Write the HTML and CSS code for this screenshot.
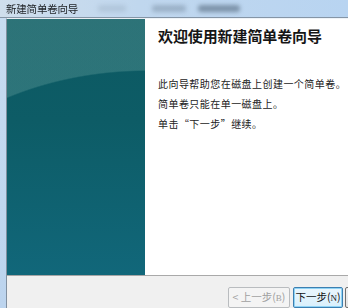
FILE: index.html
```html
<!DOCTYPE html>
<html lang="zh-CN">
<head>
<meta charset="utf-8">
<title>新建简单卷向导</title>
<link rel="stylesheet" href="styles.css">
</head>
<body>
<div class="window">
  <div class="titlebar">
    <span class="title">新建简单卷向导</span>
    <span class="ghost g1"></span>
    <span class="ghost g2"></span>
    <span class="ghost g3"></span>
  </div>
  <div class="frame">
    <div class="client">
      <div class="main">
        <div class="side"></div>
        <div class="content">
          <h1 class="heading">欢迎使用新建简单卷向导</h1>
          <p class="line first">此向导帮助您在磁盘上创建一个简单卷。</p>
          <p class="line">简单卷只能在单一磁盘上。</p>
          <p class="line">单击“下一步”继续。</p>
        </div>
      </div>
      <div class="footer">
        <button class="btn back" disabled>&lt; 上一步(<span class="key">B</span>)</button>
        <button class="btn next">下一步(<span class="key">N</span>)</button>
        <button class="btn cancel" aria-label="取消"></button>
      </div>
    </div>
  </div>
</div>
</body>
</html>
```
FILE: styles.css
```css
* { box-sizing: border-box; }
html, body {
  margin: 0;
  padding: 0;
  width: 348px;
  height: 308px;
  overflow: hidden;
  background: #c3d9ef;
  font-family: "Noto Sans CJK SC", "Noto Sans", sans-serif;
}
.window {
  width: 348px;
  height: 308px;
  display: flex;
  flex-direction: column;
  background: linear-gradient(90deg, #cfdeec 0%, #c0d7ee 40%, #b8d4f1 100%);
}
.titlebar {
  height: 18px;
  flex: none;
  display: flex;
  align-items: center;
  padding-left: 6px;
  border-bottom: 1px solid #8595a6;
  overflow: hidden;
}
.title {
  font-size: 10.5px;
  line-height: 12px;
  color: #202428;
  letter-spacing: -0.2px;
  filter: blur(0.3px);
}
.ghost {
  height: 7px;
  border-radius: 3px;
  background: rgba(90, 110, 130, 0.35);
  filter: blur(2px);
}
.g1 { width: 28px; margin-left: 20px; background: rgba(140, 160, 180, 0.3); }
.g2 { width: 34px; margin-left: 26px; }
.g3 { width: 42px; margin-left: 12px; background: rgba(60, 80, 100, 0.5); }
.frame {
  flex: 1;
  display: flex;
  padding-left: 6px;
  background: linear-gradient(180deg, #c7dcf1, #bcd4ee);
}
.client {
  flex: 1;
  display: flex;
  flex-direction: column;
  border-left: 1px solid #8190a0;
  border-top: 1px solid #eef3f8;
  background: #f0f0f0;
}
.main {
  height: 257px;
  flex: none;
  display: flex;
  border-bottom: 1px solid #a9a9a9;
}
.side {
  width: 138px;
  flex: none;
  background:
    radial-gradient(ellipse 279px 200px at 140px 251px, rgba(255,255,255,0) 99.3%, rgba(120,175,170,0.3) 100%),
    linear-gradient(180deg, #0c5962 0%, #0d5c66 40%, #11677a 100%);
  box-shadow: 1px 0 1px rgba(0,0,0,0.12);
}
.content {
  flex: 1;
  background: #ffffff;
  padding: 7px 0 0 13px;
  color: #1c1c1c;
}
.heading {
  margin: 0;
  font-size: 15px;
  line-height: 20px;
  font-weight: bold;
  letter-spacing: -0.1px;
  color: #161616;
}
.line {
  margin: 0;
  font-size: 10px;
  line-height: 20px;
  letter-spacing: 0.45px;
  color: #222;
}
.first { margin-top: 28px; }
.footer {
  flex: 1;
  display: flex;
  align-items: flex-start;
  gap: 3px;
  padding: 11px 0 0 221px;
  background: #f0f0f0;
  overflow: hidden;
}
.btn {
  flex: none;
  height: 21px;
  padding: 0;
  font-family: "Noto Sans CJK SC", "Noto Sans", sans-serif;
  font-size: 10.5px;
  line-height: 17px;
  border-radius: 2px;
}
.key { font-family: "Liberation Serif", serif; font-size: 9px; }
.back {
  width: 62px;
  color: #a0a0a0;
  background: #f4f4f4;
  border: 1px solid #b9bcbf;
}
.next {
  width: 50px;
  color: #111;
  background: linear-gradient(180deg, #eaf6fd, #d9f0fc);
  border: 1px solid #3c7fb1;
  box-shadow: inset 0 0 0 1px #8fd3f5;
}
.cancel {
  width: 60px;
  margin-left: -1px;
  background: linear-gradient(180deg, #f2f2f2, #e3e3e3);
  border: 1px solid #707070;
}
```
